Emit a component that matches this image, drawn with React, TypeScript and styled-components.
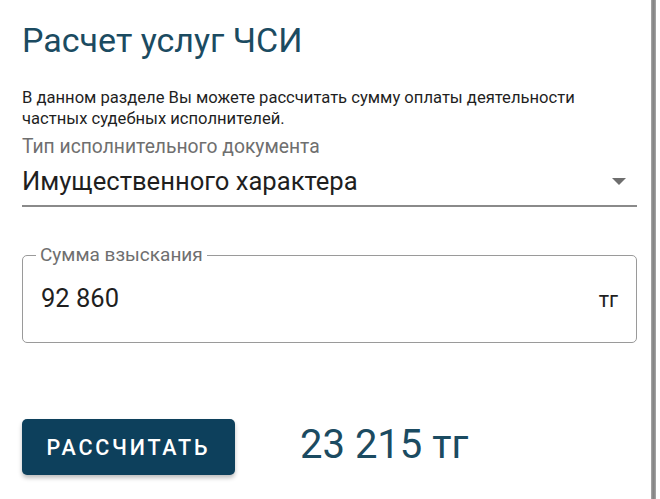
import React from 'react';
import styled, { createGlobalStyle } from 'styled-components';

const GlobalStyle = createGlobalStyle`
  html, body {
    margin: 0;
    padding: 0;
    background: #ffffff;
  }
  body {
    font-family: Roboto, "Noto Sans", "Liberation Sans", sans-serif;
    color: #212121;
  }
`;

const Page = styled.div`
  display: flex;
  width: 660px;
  height: 499px;
  overflow: hidden;
`;

const Content = styled.main`
  width: 615px;
  padding: 19px 0 0 22px;
  display: flex;
  flex-direction: column;
`;

const Divider = styled.div`
  margin-left: 14px;
  width: 5px;
  height: 100%;
  background: linear-gradient(to right, #aaa, #858585 40%, #858585 60%, #aaa);
`;

const Title = styled.h1`
  margin: 0;
  font-size: 34px;
  font-weight: 400;
  line-height: 42px;
  color: #1b4b61;
`;

const Description = styled.p`
  margin: 26px 0 6px;
  font-size: 16.6px;
  line-height: 21px;
  color: #1f1f1f;
`;

const SelectField = styled.div`
  display: flex;
  flex-direction: column;
  border-bottom: 2px solid #8a8a8a;
  padding-bottom: 8px;
`;

const FieldLabel = styled.label`
  font-size: 19.3px;
  line-height: 24px;
  color: #6f6f6f;
`;

const SelectRow = styled.div`
  display: flex;
  align-items: center;
  justify-content: space-between;
  margin-top: 6px;
`;

const SelectValue = styled.span`
  font-size: 25.6px;
  line-height: 32px;
  color: #1f1f1f;
`;

const Arrow = styled.span`
  width: 0;
  height: 0;
  margin-right: 11px;
  border-left: 7px solid transparent;
  border-right: 7px solid transparent;
  border-top: 7px solid #6e6e6e;
`;

const Outlined = styled.div`
  position: relative;
  margin-top: 48px;
  height: 88px;
  padding: 0 18px;
  box-sizing: border-box;
  border: 1.5px solid #9a9a9a;
  border-radius: 5px;
  display: flex;
  align-items: center;
  justify-content: space-between;
`;

const FloatingLabel = styled.span`
  position: absolute;
  top: -12px;
  left: 13px;
  padding: 0 4px;
  background: #ffffff;
  font-size: 19px;
  line-height: 22px;
  color: #6f6f6f;
`;

const InputValue = styled.span`
  font-size: 25.5px;
  color: #1f1f1f;
  margin-top: -2px;
`;

const Suffix = styled.span`
  font-size: 21.5px;
  color: #1f1f1f;
`;

const ActionRow = styled.div`
  margin-top: 76px;
  display: flex;
  align-items: center;
  gap: 65px;
`;

const Button = styled.button`
  width: 213px;
  height: 56px;
  padding: 0;
  border: none;
  border-radius: 5px;
  background: #0d405c;
  color: #ffffff;
  font-family: Roboto, "Noto Sans", sans-serif;
  font-size: 21.5px;
  font-weight: 500;
  letter-spacing: 2.8px;
  box-shadow: 0 3px 4px rgba(0, 0, 0, 0.25);
  cursor: pointer;
`;

const Result = styled.span`
  font-size: 40px;
  line-height: 50px;
  color: #1b4b61;
  margin-top: -4px;
`;

const App: React.FC = () => {
  return (
    <Page>
      <GlobalStyle />
      <Content>
        <Title>Расчет услуг ЧСИ</Title>
        <Description>
          В данном разделе Вы можете рассчитать сумму оплаты деятельности
          <br />
          частных судебных исполнителей.
        </Description>
        <SelectField>
          <FieldLabel>Тип исполнительного документа</FieldLabel>
          <SelectRow>
            <SelectValue>Имущественного характера</SelectValue>
            <Arrow />
          </SelectRow>
        </SelectField>
        <Outlined>
          <FloatingLabel>Сумма взыскания</FloatingLabel>
          <InputValue>92 860</InputValue>
          <Suffix>тг</Suffix>
        </Outlined>
        <ActionRow>
          <Button>РАССЧИТАТЬ</Button>
          <Result>23 215 тг</Result>
        </ActionRow>
      </Content>
      <Divider />
    </Page>
  );
};

export default App;
